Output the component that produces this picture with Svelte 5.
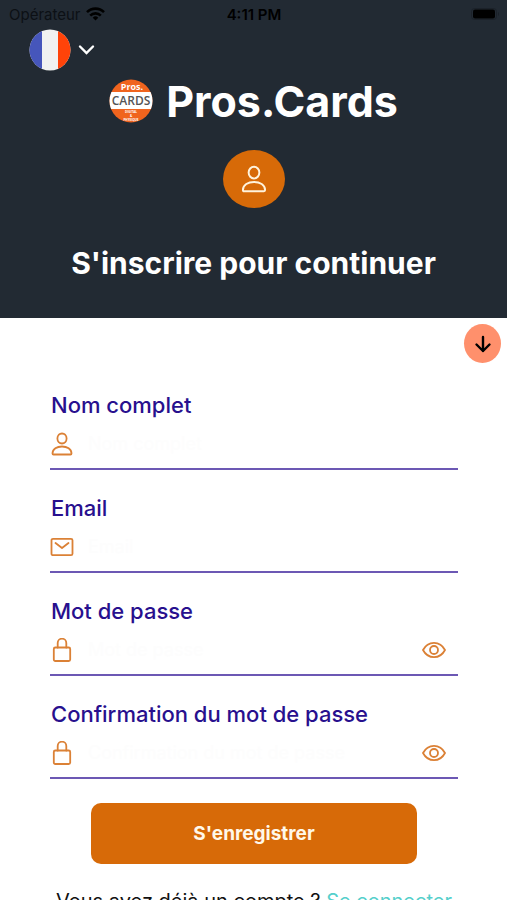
<script lang="ts">
  type Field = {
    id: string;
    label: string;
    icon: 'user' | 'mail' | 'lock';
    type: 'text' | 'email' | 'password';
  };

  const fields: Field[] = [
    { id: 'name', label: 'Nom complet', icon: 'user', type: 'text' },
    { id: 'email', label: 'Email', icon: 'mail', type: 'email' },
    { id: 'password', label: 'Mot de passe', icon: 'lock', type: 'password' },
    { id: 'confirm', label: 'Confirmation du mot de passe', icon: 'lock', type: 'password' },
  ];

  let values: Record<string, string> = $state({ name: '', email: '', password: '', confirm: '' });
  let visible: Record<string, boolean> = $state({ password: false, confirm: false });
  let bottom: HTMLElement;
</script>

{#snippet user()}
  <ellipse cx="12" cy="6.500" rx="4.600" ry="5" />
  <path d="M2.500 21.500c0-4.500 4.500-7 9.500-7s9.500 2.500 9.500 7q0 1-1 1h-17q-1 0-1-1z" />
{/snippet}

<div class="screen">
  <header>
    <div class="status">
      <span class="carrier">
        Opérateur
        <svg width="19" height="14" viewBox="0 0 19 14" aria-hidden="true">
          <g fill="none" stroke="#000" stroke-width="2.600">
            <path d="M1 5.200a12 12 0 0 1 17 0" />
            <path d="M4.200 8.600a7.500 7.500 0 0 1 10.600 0" />
          </g>
          <path d="M6.700 10.700a4 4 0 0 1 5.600 0L9.500 13.500z" />
        </svg>
      </span>
      <span class="time">4:11 PM</span>
      <svg class="battery" width="28" height="12" viewBox="0 0 28 12" aria-hidden="true">
        <rect x="0.500" y="0.500" width="25" height="11" rx="3" fill="none" stroke="#1b2129" />
        <rect x="2" y="1.500" width="22" height="9" rx="2" />
        <path d="M27 4v4q1-.5 1-2t-1-2z" fill="#1b2129" />
      </svg>
    </div>

    <button class="language" type="button" aria-label="Français">
      <svg width="42" height="42" viewBox="0 0 42 42">
        <clipPath id="flag"><circle cx="21" cy="21" r="20.500" /></clipPath>
        <g clip-path="url(#flag)">
          <rect width="42" height="42" fill="#f1f2f1" />
          <rect width="13" height="42" fill="#4656bb" />
          <rect x="29" width="13" height="42" fill="#ff4309" />
        </g>
      </svg>
      <svg width="17" height="12" viewBox="0 0 17 12" fill="none" stroke="#fff" stroke-width="2.400">
        <path d="M2 2.500l6.500 6.500L15 2.500" stroke-linecap="round" />
      </svg>
    </button>

    <div class="brand">
      <svg width="44" height="44" viewBox="0 0 44 44" aria-hidden="true">
        <clipPath id="logo"><circle cx="22" cy="22" r="21.500" /></clipPath>
        <g clip-path="url(#logo)">
          <rect width="44" height="44" fill="#f0641e" />
          <rect y="13" width="44" height="17" fill="#fff" />
        </g>
        <g font-family="'Open Sans', sans-serif" font-weight="700" text-anchor="middle">
          <text x="23" y="10.500" font-size="9" fill="#fff">Pros.</text>
          <text x="22" y="25.500" font-size="12" font-weight="600" fill="#555">CARDS</text>
          <text x="22" y="33.500" font-size="3" fill="#fff">DIGITAL</text>
          <text x="22" y="37.600" font-size="3" fill="#fff">&amp;</text>
          <text x="22" y="41.700" font-size="3" fill="#fff">PHYSIQUE</text>
        </g>
      </svg>
      <span>Pros.Cards</span>
    </div>

    <div class="avatar">
      <svg width="28" height="28" viewBox="0 0 24 24" fill="none" stroke="#fff3dc" stroke-width="1.700" stroke-linejoin="round">
        {@render user()}
      </svg>
    </div>

    <h1>S'inscrire pour continuer</h1>
  </header>

  <main>
    <button class="down" type="button" aria-label="Descendre" onclick={() => bottom.scrollIntoView()}>
      <svg width="18" height="18" viewBox="0 0 18 18" fill="none" stroke="#000" stroke-width="2.400" stroke-linecap="round" stroke-linejoin="round">
        <path d="M9 2v14M2.500 9.500L9 16l6.500-6.500" />
      </svg>
    </button>

    <form onsubmit={(e) => e.preventDefault()}>
      {#each fields as field (field.id)}
        <div class="field">
          <label for={field.id}>{field.label}</label>
          <div class="row">
            <svg class="icon" width="24" height="24" viewBox="0 0 24 24">
              {#if field.icon === 'user'}
                {@render user()}
              {:else if field.icon === 'mail'}
                <rect x="1.500" y="3.800" width="21" height="16.400" rx="1.500" />
                <path d="M5.500 8l6.500 5L18.500 8" />
              {:else}
                <rect x="3.800" y="9.500" width="16.400" height="13.500" rx="1.500" />
                <path d="M7.700 9.500V5a4.300 4.300 0 0 1 8.600 0v4.500" />
              {/if}
            </svg>
            <input
              id={field.id}
              type={visible[field.id] ? 'text' : field.type}
              placeholder={field.label}
              bind:value={values[field.id]}
            />
            {#if field.type === 'password'}
              <button
                class="eye"
                type="button"
                aria-label="Afficher le mot de passe"
                onclick={() => (visible[field.id] = !visible[field.id])}
              >
                <svg class="icon" width="24" height="24" viewBox="0 0 24 24">
                  <path d="M1 12C6 2.500 18 2.500 23 12C18 21.500 6 21.500 1 12z" />
                  <circle cx="12" cy="12" r="4" />
                </svg>
              </button>
            {/if}
          </div>
        </div>
      {/each}

      <button class="submit" type="submit">S'enregistrer</button>
    </form>

    <p bind:this={bottom}>Vous avez déjà un compte ? <a href="#login">Se connecter</a></p>
  </main>
</div>

<style>
  :global(body) {
    background: #fff;
  }

  .screen {
    height: 100vh;
    overflow-y: auto;
    scrollbar-width: none;
    font-family: Inter, 'Liberation Sans', sans-serif;
  }

  button {
    padding: 0;
    border: 0;
    background: none;
    font-family: inherit;
    cursor: pointer;
  }

  svg {
    display: block;
    flex: none;
  }

  header {
    display: flex;
    flex-direction: column;
    align-items: center;
    padding-bottom: 35px;
    background: #222a33;
    color: #fff;
  }

  .status {
    display: grid;
    grid-template-columns: 1fr auto 1fr;
    align-items: center;
    align-self: stretch;
    height: 28px;
    padding: 0 8px 0 9px;
    color: #000;
    font-size: 15px;
  }

  .carrier {
    display: flex;
    align-items: center;
    gap: 5px;
    color: #0c1015;
  }

  .time {
    font-weight: 600;
  }

  .battery {
    justify-self: end;
  }

  .language {
    display: flex;
    align-items: center;
    align-self: flex-start;
    gap: 7px;
    height: 44px;
    margin-left: 29px;
  }

  .brand {
    display: flex;
    align-items: center;
    gap: 13px;
    height: 50px;
    margin-top: 4px;
    font-size: 43px;
    font-weight: 700;
  }

  .avatar {
    display: grid;
    place-items: center;
    width: 62px;
    height: 58px;
    margin-top: 24px;
    border-radius: 50%;
    background: #d76a08;
  }

  h1 {
    margin: 35px 0 0;
    font-size: 30px;
    font-weight: 700;
    line-height: 40px;
  }

  main {
    position: relative;
    padding: 73px 49px 32px 50px;
  }

  .down {
    position: absolute;
    top: 6px;
    right: 6px;
    display: grid;
    place-items: center;
    width: 37px;
    height: 39px;
    border-radius: 50%;
    background: #ff906c;
  }

  .field {
    margin-bottom: 24px;
  }

  label {
    display: block;
    padding-left: 1px;
    color: #28108e;
    font-size: 22px;
    font-weight: 500;
    line-height: 28px;
  }

  .row {
    display: flex;
    align-items: center;
    height: 49px;
    border-bottom: 2px solid #6c58b4;
  }

  .icon {
    fill: none;
    stroke: #db8136;
    stroke-width: 1.8;
    stroke-linejoin: round;
    stroke-linecap: round;
  }

  input {
    flex: 1;
    min-width: 0;
    padding: 0 12px 0 14px;
    border: 0;
    outline: 0;
    background: none;
    color: #222a33;
    font-family: inherit;
    font-size: 18px;
  }

  input::placeholder {
    color: #fdfdfd;
    opacity: 1;
  }

  .eye {
    margin-right: 12px;
  }

  .submit {
    display: block;
    width: 80%;
    height: 61px;
    margin: 0 auto;
    border-radius: 10px;
    background: #d76a08;
    color: #fff8ea;
    font-size: 19px;
    font-weight: 700;
  }

  p {
    margin: 23px 0 0;
    color: #111;
    font-size: 20px;
    line-height: 28px;
    text-align: center;
  }

  a {
    color: #55cfcb;
    text-decoration: none;
  }
</style>
